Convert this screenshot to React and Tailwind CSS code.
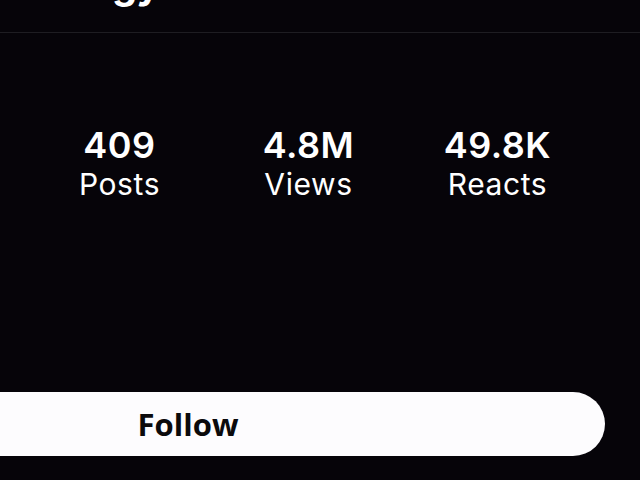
import React from "react";

const STATS = [
  { value: "409", label: "Posts" },
  { value: "4.8M", label: "Views" },
  { value: "49.8K", label: "Reacts" },
];

export default function App() {
  return (
    <div className="w-[640px] h-[480px] overflow-hidden bg-[#060409] text-white" style={{ fontFamily: "Inter, 'Liberation Sans', sans-serif" }}>
      {/* title, scrolled mostly out of view */}
      <div className="h-[33px] overflow-hidden border-b border-[#1e1d22]">
        <div className="-mt-[36px] ml-[112px] text-[40px] leading-[40px] font-bold tracking-tight">gy</div>
      </div>

      <div className="ml-[25px] w-[567px] grid grid-cols-3 mt-[92px]">
        {STATS.map((s) => (
          <div key={s.label} className="flex flex-col items-center">
            <span className="text-[36px] leading-[40px] font-semibold tracking-[0.5px]">{s.value}</span>
            <span className="text-[30px] leading-[38px] font-normal tracking-[0.6px]">{s.label}</span>
          </div>
        ))}
      </div>

      <div className="mt-[189px] ml-[-229px] w-[834px] h-[64px] rounded-full bg-[#fdfcfe] flex items-center justify-center">
        <span className="text-[31px] font-bold text-[#0b0a0c]" style={{ fontFamily: "'Open Sans', sans-serif" }}>Follow</span>
      </div>
    </div>
  );
}
